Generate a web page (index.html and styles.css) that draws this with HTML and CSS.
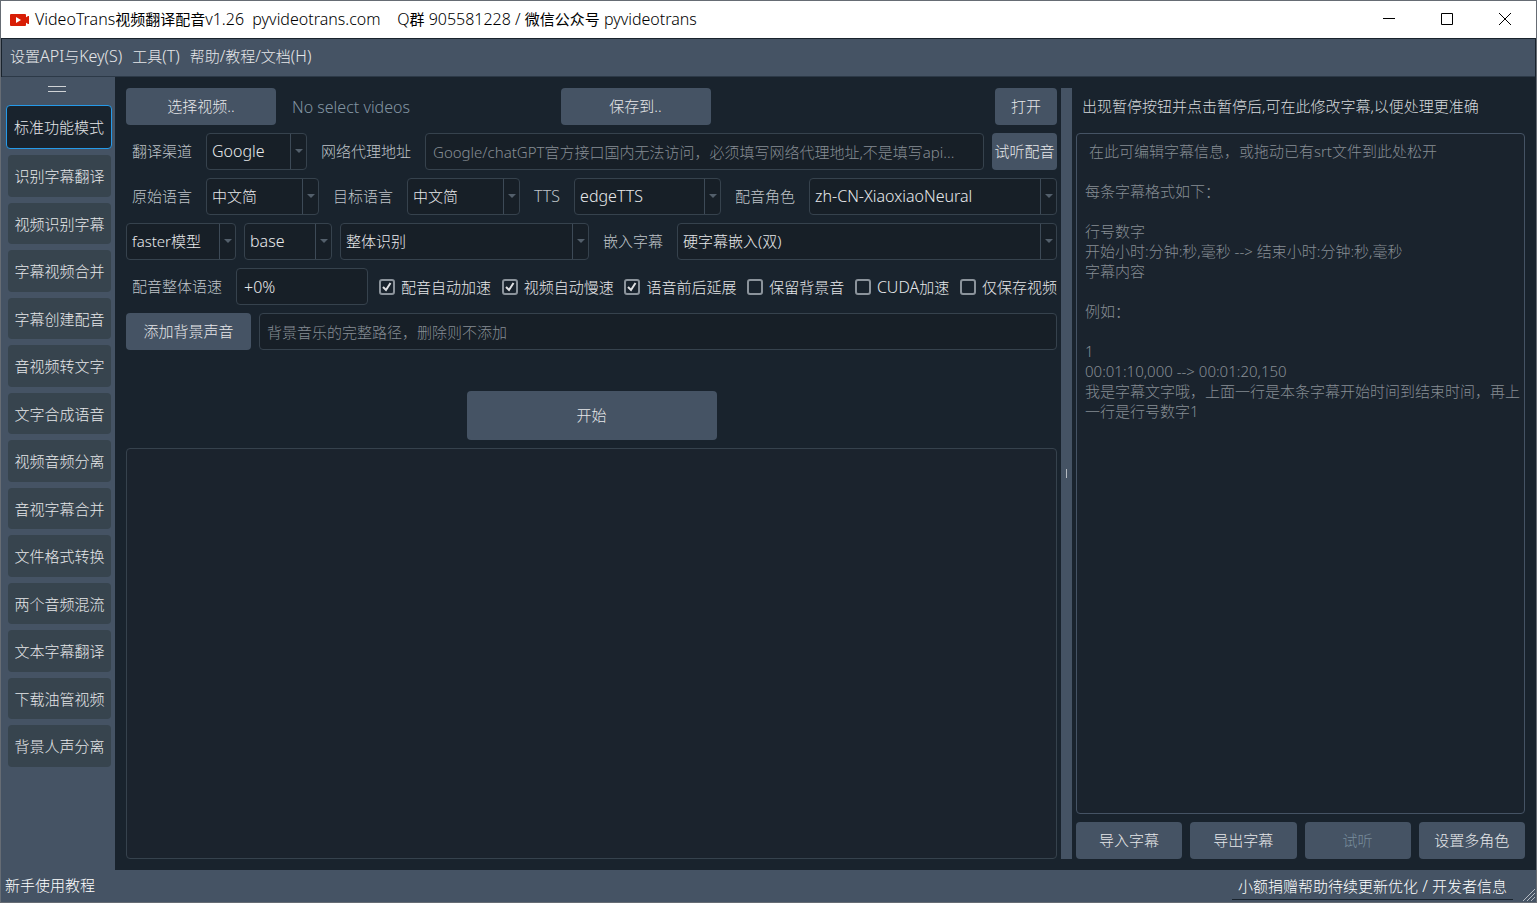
FILE: index.html
```html
<!DOCTYPE html>
<html lang="zh-CN">
<head>
<meta charset="utf-8">
<title>VideoTrans视频翻译配音v1.26</title>
<link rel="stylesheet" href="styles.css">
</head>
<body>
<div class="window">
  <header class="titlebar">
    <svg class="logo" width="20" height="14" viewBox="0 0 20 14" aria-hidden="true"><rect x="0" y="1" width="16" height="12" rx="1" fill="#d81e06"/><path d="M15 5l3-2h1v8h-1l-3-2z" fill="#d81e06"/><path d="M6 4l5 3-5 3z" fill="#fff"/></svg>
    <h1 class="title"><span class="latin">VideoTrans</span>视频翻译配音<span class="latin">v1.26  pyvideotrans.com    Q</span>群<span class="latin"> 905581228 / </span>微信公众号<span class="latin"> pyvideotrans</span></h1>
    <div class="winctl">
      <button class="winbtn" aria-label="最小化"><svg width="12" height="12" viewBox="0 0 12 12"><path d="M0 5.5h12" stroke="#000" fill="none"/></svg></button>
      <button class="winbtn" aria-label="最大化"><svg width="12" height="12" viewBox="0 0 12 12"><path d="M.5 .5h11v11h-11z" stroke="#000" fill="none"/></svg></button>
      <button class="winbtn" aria-label="关闭"><svg width="12" height="12" viewBox="0 0 12 12"><path d="M0 0l12 12M12 0L0 12" stroke="#000" fill="none"/></svg></button>
    </div>
  </header>
  <nav class="menubar">
    <button class="menu">设置<span class="latin">API</span>与<span class="latin">Key(S)</span></button>
    <button class="menu">工具<span class="latin">(T)</span></button>
    <button class="menu">帮助<span class="latin">/</span>教程<span class="latin">/</span>文档<span class="latin">(H)</span></button>
  </nav>
  <div class="body">
    <aside class="sidebar">
      <div class="handle"></div>
      <button class="tool active">标准功能模式</button>
      <div class="tools">
        <button class="tool">识别字幕翻译</button>
        <button class="tool">视频识别字幕</button>
        <button class="tool">字幕视频合并</button>
        <button class="tool">字幕创建配音</button>
        <button class="tool">音视频转文字</button>
        <button class="tool">文字合成语音</button>
        <button class="tool">视频音频分离</button>
        <button class="tool">音视字幕合并</button>
        <button class="tool">文件格式转换</button>
        <button class="tool">两个音频混流</button>
        <button class="tool">文本字幕翻译</button>
        <button class="tool">下载油管视频</button>
        <button class="tool">背景人声分离</button>
      </div>
    </aside>
    <main class="main">
      <div class="row">
        <button class="btn wide">选择视频..</button>
        <span class="hint latin">No select videos</span>
        <button class="btn wide">保存到..</button>
        <span class="space"></span>
        <button class="btn open">打开</button>
      </div>
      <div class="row">
        <label class="label" for="channel">翻译渠道</label>
        <select class="select latin w-channel" id="channel"><option>Google</option></select>
        <label class="label" for="proxy">网络代理地址</label>
        <input class="field grow" id="proxy" type="text" placeholder="Google/chatGPT官方接口国内无法访问，必须填写网络代理地址,不是填写api...">
        <button class="btn listen">试听配音</button>
      </div>
      <div class="row">
        <label class="label" for="source">原始语言</label>
        <select class="select w-lang" id="source"><option>中文简</option></select>
        <label class="label" for="target">目标语言</label>
        <select class="select w-lang" id="target"><option>中文简</option></select>
        <label class="label latin" for="tts">TTS</label>
        <select class="select latin w-tts" id="tts"><option>edgeTTS</option></select>
        <label class="label" for="role">配音角色</label>
        <select class="select latin grow" id="role"><option>zh-CN-XiaoxiaoNeural</option></select>
      </div>
      <div class="row">
        <select class="select w-engine" aria-label="识别引擎"><option>faster模型</option></select>
        <select class="select latin w-model" aria-label="模型"><option>base</option></select>
        <select class="select w-split" aria-label="识别方式"><option>整体识别</option></select>
        <label class="label" for="embed">嵌入字幕</label>
        <select class="select grow" id="embed"><option>硬字幕嵌入(双)</option></select>
      </div>
      <div class="row">
        <label class="label" for="rate">配音整体语速</label>
        <input class="field latin w-rate" id="rate" type="text" value="+0%">
        <div class="checks">
          <label class="check"><input type="checkbox" checked>配音自动加速</label>
          <label class="check"><input type="checkbox" checked>视频自动慢速</label>
          <label class="check"><input type="checkbox" checked>语音前后延展</label>
          <label class="check"><input type="checkbox">保留背景音</label>
          <label class="check"><input type="checkbox"><span><span class="latin">CUDA</span>加速</span></label>
          <label class="check"><input type="checkbox">仅保存视频</label>
        </div>
      </div>
      <div class="row">
        <button class="btn music">添加背景声音</button>
        <input class="field grow" type="text" aria-label="背景音乐" placeholder="背景音乐的完整路径，删除则不添加">
      </div>
      <button class="btn start">开始</button>
      <div class="log"></div>
    </main>
    <div class="splitter"><span class="grip"></span></div>
    <section class="subtitles">
      <label class="subtitle-label" for="srt">出现暂停按钮并点击暂停后,可在此修改字幕,以便处理更准确</label>
      <textarea class="editor" id="srt" placeholder=" 在此可编辑字幕信息，或拖动已有srt文件到此处松开&#10;&#10;每条字幕格式如下：&#10;&#10;行号数字&#10;开始小时:分钟:秒,毫秒 --&gt; 结束小时:分钟:秒,毫秒&#10;字幕内容&#10;&#10;例如：&#10;&#10;1&#10;00:01:10,000 --&gt; 00:01:20,150&#10;我是字幕文字哦，上面一行是本条字幕开始时间到结束时间，再上一行是行号数字1"></textarea>
      <div class="row">
        <button class="btn grow">导入字幕</button>
        <button class="btn grow">导出字幕</button>
        <button class="btn grow" disabled>试听</button>
        <button class="btn grow">设置多角色</button>
      </div>
    </section>
  </div>
  <footer class="statusbar">
    <button class="status">新手使用教程</button>
    <button class="status donate">小额捐赠帮助待续更新优化<span class="latin"> / </span>开发者信息</button>
    <svg class="resize" width="14" height="14" viewBox="0 0 14 14" aria-hidden="true"><path d="M1 13L13 1M5 13l8-8M9 13l4-4" stroke="#b4bac1" fill="none"/></svg>
  </footer>
</div>
</body>
</html>
```
FILE: styles.css
```css
* { box-sizing: border-box; }

body {
  margin: 0;
  background: #19232d;
}

body, button, input, select, textarea {
  font-family: "Noto Sans", "Noto Sans CJK SC", sans-serif;
  font-size: 15px;
  line-height: 20px;
  font-weight: 300;
}

.latin { font-size: 16px; }

button {
  border: 0;
  padding: 0 0 2px;
  background: none;
  color: #e6e7e9;
  white-space: nowrap;
}

.window {
  display: flex;
  flex-direction: column;
  height: 100vh;
  border: 1px solid #666c74;
  background: #19232d;
}

/* Title bar */
.titlebar {
  display: flex;
  align-items: center;
  height: 37px;
  padding: 0 2px 0 9px;
  gap: 5px;
  background: #fff;
  color: #000;
}

.title {
  flex: 1;
  margin: 0;
  padding-bottom: 2px;
  font-size: 15px;
  font-weight: 400;
  white-space: pre;
}

.title .latin { font-weight: 300; }

.winctl { display: flex; }

.winbtn {
  display: grid;
  place-items: center;
  width: 58px;
  height: 37px;
}

/* Menu bar */
.menubar {
  display: flex;
  gap: 10px;
  height: 38px;
  margin: 1px 1px 0;
  padding: 0 8px 2px;
  background: #455364;
  border-bottom: 1px solid #2c3947;
}

.body {
  display: flex;
  flex: 1;
  min-height: 0;
}

/* Sidebar */
.sidebar {
  width: 114px;
  padding: 9px 4px 0 5px;
  background: #455364;
}

.handle {
  width: 18px;
  height: 6px;
  margin: 0 auto 13px 42px;
  border: solid #d0d3d6;
  border-width: 1px 0;
}

.tool {
  display: block;
  width: 100%;
  height: 41px;
  padding-bottom: 0;
  border-radius: 4px;
  background: #37444e;
}

.tool:nth-child(odd) { height: 42px; }

.tool.active {
  width: 106px;
  height: 44px;
  border: 1px solid #259ae9;
  background: #19232d;
}

.tools {
  display: flex;
  flex-direction: column;
  gap: 6px;
  padding: 6px 0 0 2px;
}

/* Main form */
.main {
  display: flex;
  flex: 1;
  flex-direction: column;
  gap: 8px;
  min-width: 0;
  padding: 11px 4px 11px 11px;
}

.row {
  display: flex;
  gap: 8px;
  height: 37px;
}

.btn {
  border-radius: 4px;
  background: #455364;
}

.btn:disabled { color: #788d9c; }

.wide { width: 150px; }
.open { width: 62px; }
.listen { width: 65px; }
.music { width: 125px; }

.hint {
  flex: 1;
  align-self: center;
  padding-left: 8px;
  color: #8294a2;
}

.space {
  flex: 1;
  padding-left: 8px;
}

.grow {
  flex: 1;
  min-width: 0;
}

.label {
  align-self: center;
  padding: 0 6px 2px;
  color: #bfc4c9;
  white-space: nowrap;
}

.field, .select {
  height: 37px;
  border: 1px solid #36424d;
  border-radius: 4px;
  background-color: #171f27;
  color: #e8e9eb;
  outline: 0;
}

.field { padding: 0 7px; }

.field::placeholder, .editor::placeholder {
  color: #868d94;
  opacity: 1;
}

.select {
  appearance: none;
  padding: 0 18px 2px 5px;
  background-image:
    url("data:image/svg+xml,%3Csvg xmlns='http://www.w3.org/2000/svg' width='8' height='5'%3E%3Cpath d='M0 0h8L4 4z' fill='%23535f6b'/%3E%3C/svg%3E"),
    linear-gradient(#3d4a57, #3d4a57);
  background-position: right 3px center, right 15px center;
  background-size: 8px 5px, 1px 100%;
  background-repeat: no-repeat;
}

.w-channel { width: 101px; }
.w-lang { width: 113px; }
.w-tts { width: 147px; }
.w-engine { width: 110px; }
.w-model { width: 88px; }
.w-split { width: 249px; }
.w-rate { width: 132px; }

.checks {
  display: flex;
  flex: 1;
  align-items: center;
  justify-content: space-between;
  padding-left: 3px;
}

.check {
  display: flex;
  align-items: center;
  gap: 6px;
  color: #e6e7e9;
  white-space: nowrap;
}

.check input {
  appearance: none;
  width: 16px;
  height: 16px;
  margin: 0;
  border: 2px solid #8b939b;
  border-radius: 3px;
}

.check input:checked {
  background: url("data:image/svg+xml,%3Csvg xmlns='http://www.w3.org/2000/svg' width='12' height='12'%3E%3Cpath d='M2 6l3 3 4.500-7' fill='none' stroke='%23e0e1e3' stroke-width='2'/%3E%3C/svg%3E") center no-repeat;
}

.start {
  align-self: center;
  width: 250px;
  height: 49px;
  margin-top: 33px;
}

.log {
  flex: 1;
  border: 1px solid #36424d;
  border-radius: 4px;
  background: #1b232d;
}

/* Splitter */
.splitter {
  display: grid;
  place-items: center;
  width: 11px;
  margin: 11px 0;
  background: #455364;
}

.grip {
  width: 1px;
  height: 9px;
  background: #b4bac1;
}

/* Subtitle editor */
.subtitles {
  display: flex;
  flex-direction: column;
  gap: 8px;
  width: 464px;
  padding: 11px 11px 11px 4px;
}

.subtitle-label {
  height: 37px;
  padding: 8px 6px;
  color: #d6d9dc;
  white-space: nowrap;
}

.editor {
  flex: 1;
  padding: 7px 3px 7px 8px;
  border: 1px solid #455364;
  border-radius: 4px;
  background: #1a232d;
  color: #e0e1e3;
  outline: 0;
  resize: none;
}

/* Status bar */
.statusbar {
  display: flex;
  align-items: center;
  height: 32px;
  padding-left: 4px;
  background: #455364;
}

.status { color: #fff; }

.donate {
  height: 27px;
  margin-left: auto;
  padding: 0 6px;
  border-bottom: 1px solid #19232d;
}

.resize {
  align-self: flex-end;
  margin-left: 9px;
}
```
